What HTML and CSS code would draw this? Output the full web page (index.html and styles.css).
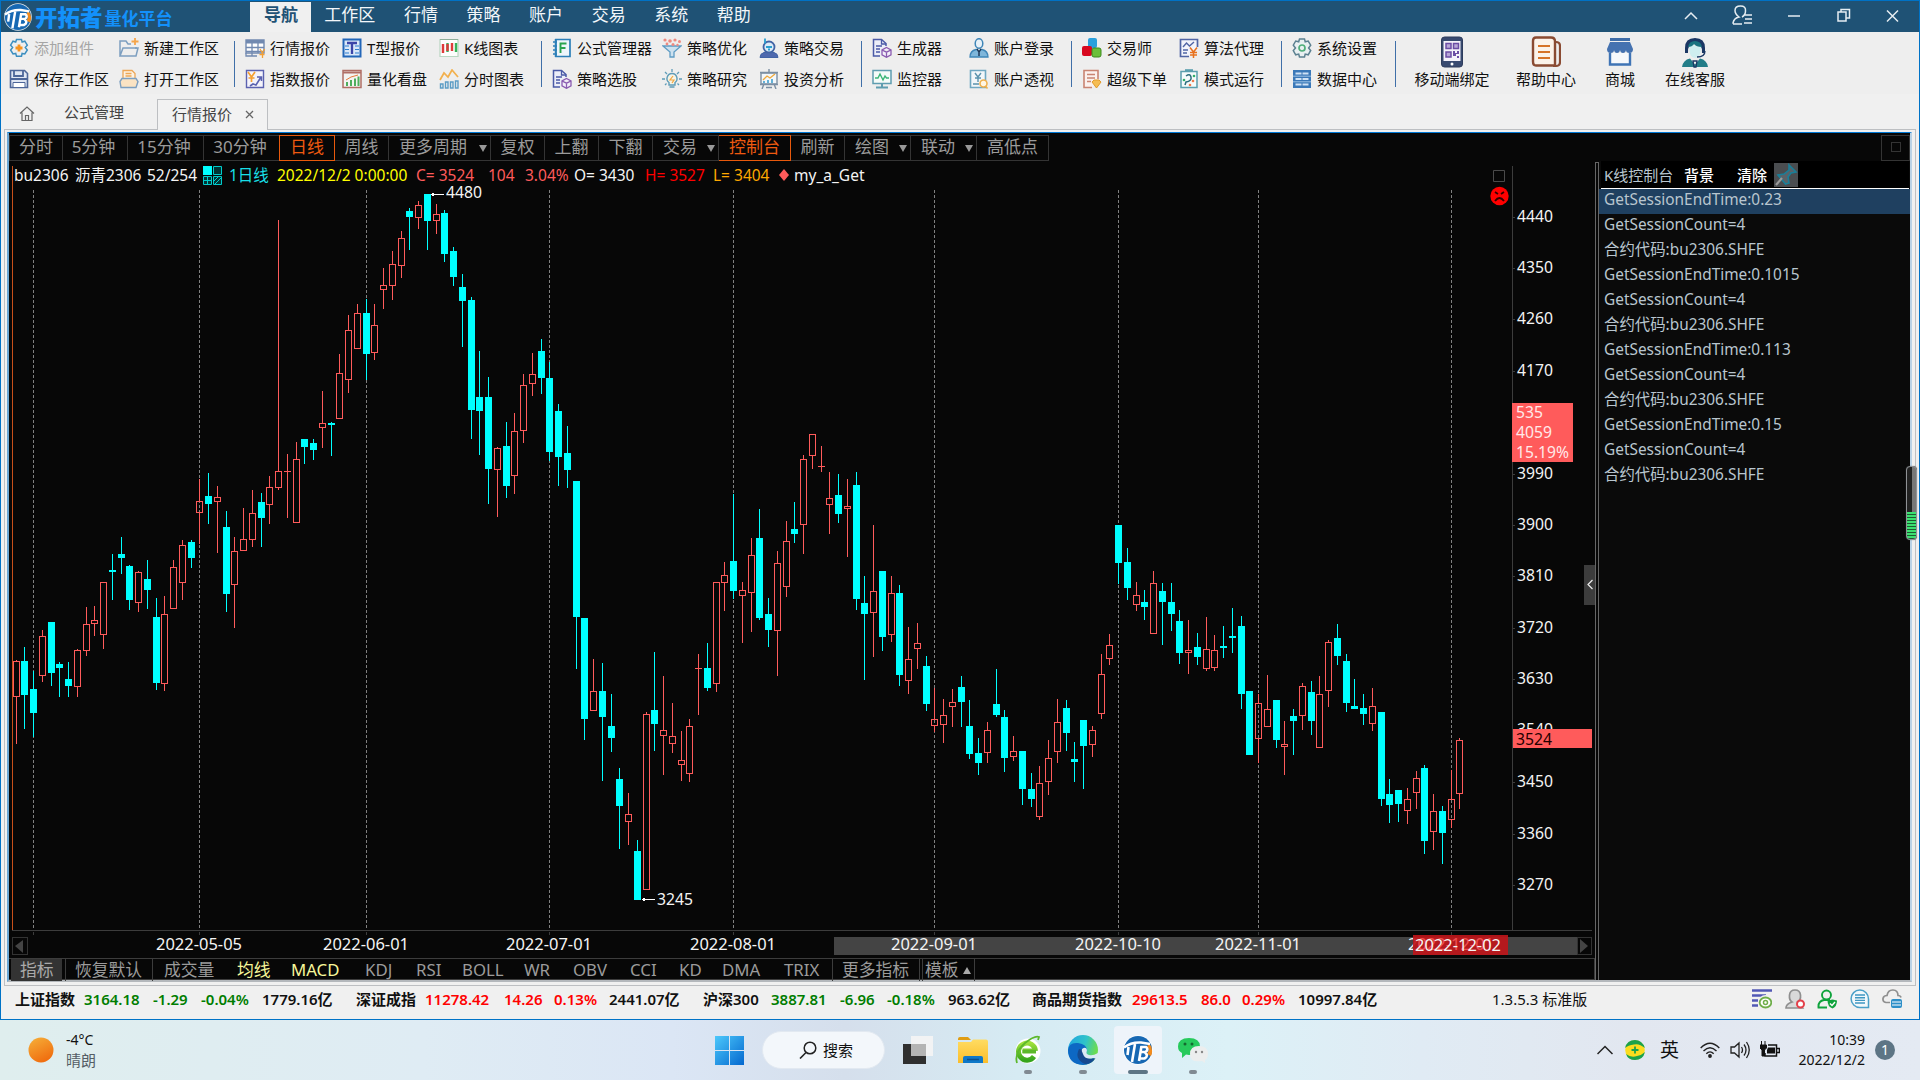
FILE: index.html
```
<!DOCTYPE html>
<html lang="zh-CN">
<head>
<meta charset="utf-8">
<title>开拓者量化平台</title>
<link rel="stylesheet" href="styles.css">
</head>
<body>
<svg class="sprite" width="0" height="0" aria-hidden="true">
  <defs>
    <linearGradient id="g-sun" x1="0" y1="0" x2="0.5" y2="1"><stop offset="0" stop-color="#f6b13a"/><stop offset="1" stop-color="#f06f10"/></linearGradient>
    <linearGradient id="g-win" x1="0" y1="0" x2="1" y2="1"><stop offset="0" stop-color="#4cc8fb"/><stop offset="1" stop-color="#0468cf"/></linearGradient>
    <linearGradient id="g-edge" x1="0" y1="0" x2="1" y2="0.3"><stop offset="0" stop-color="#1fa3e2"/><stop offset="0.6" stop-color="#2fc3c9"/><stop offset="1" stop-color="#6bdc52"/></linearGradient>
    <linearGradient id="g-e" x1="0" y1="0" x2="0" y2="1"><stop offset="0" stop-color="#9fe03c"/><stop offset="1" stop-color="#35a51c"/></linearGradient>
    <linearGradient id="g-fold" x1="0" y1="0" x2="0" y2="1"><stop offset="0" stop-color="#ffdc62"/><stop offset="1" stop-color="#fbbd2a"/></linearGradient>
  </defs>
  <symbol id="logo" viewBox="0 0 30 30">
    <circle cx="15" cy="15" r="14.800" fill="#fff" opacity=".85"/><circle cx="15" cy="15" r="14" fill="#1768b3"/>
    <path d="M26 8q5 6 2 13l-4-2 2-4-2-3z" fill="#f38b1c"/>
    <path d="M1 12.500Q8 7 18 7.500L27 9" stroke="#fff" stroke-width="2.600" fill="none"/>
    <path d="M5.500 12L4.500 20M12 9L9 27M18.500 11l-2.500 15M18 12h5q3 2.500-.5 5H18M22 17.500q4 3.500-.5 6H17" stroke="#fff" stroke-width="2.600" fill="none"/>
  </symbol>
  <symbol id="addc" viewBox="0 0 20 20"><path d="M7.500 1.500h5l.6 2.500 2.700-.8 2.500 4-2 2.300 2 2.500-2.500 4-2.700-.6-.6 2.800h-5l-.8-2.800-2.700.6-2.400-4 2-2.500-2-2.300 2.400-4 2.700.8z" fill="none" stroke="#3c8fc0" stroke-width="1.500"/><path d="M10 6.500v7M6.500 10h7" stroke="#f7931e" stroke-width="2.800"/></symbol>
  <symbol id="newws" viewBox="0 0 20 20"><path d="M1 18V3h6l2 3h3M17 9v2M1 18l3-8h15l-2 8z" fill="none" stroke="#7d9fc0" stroke-width="1.500"/><path d="M16 0v7M12.500 3.500h7" stroke="#f5a54a" stroke-width="1.800"/></symbol>
  <symbol id="save" viewBox="0 0 20 20"><path d="M1.500 1.500h14l3 3v14h-17z" fill="#dfe6f3" stroke="#4d6699" stroke-width="1.600"/><path d="M5 1v6h9V1M1 10h18" stroke="#4d6699" stroke-width="1.800" fill="none"/><path d="M4 13.500h12v5H4z" fill="#fff" stroke="#4d6699"/></symbol>
  <symbol id="openws" viewBox="0 0 20 20"><path d="M4 9V1.500h9l3 3V9" fill="#fdf2e2" stroke="#eda656" stroke-width="1.300"/><path d="M6.500 4.500h6M6.500 7h6" stroke="#eda656" stroke-width="1.300"/><path d="M3 9.500h14l2 3-2 6H2l-1-6z" fill="#fbe3c3" stroke="#7d9fc0" stroke-width="1.400"/></symbol>
  <symbol id="quote" viewBox="0 0 20 20"><path d="M1 2h18v13H1z" fill="#fff" stroke="#7189b0" stroke-width="1.400"/><path d="M1 2h18v3.500H1z" fill="#7189b0"/><path d="M7 5v13M13 5v10M1 9.500h18M1 13.500h18M1 15v3h11" stroke="#7189b0" stroke-width="1.300" fill="none"/><path d="M15 11l2.500 4 2-4M17.500 15v5M14.500 16.500h5" stroke="#f5a033" stroke-width="1.300" fill="none"/></symbol>
  <symbol id="index" viewBox="0 0 20 20"><path d="M1.500 1.500h17v17h-17z" fill="#f4f3fb" stroke="#5b62b0" stroke-width="1.400"/><path d="M3 3l3.500 5L10 3M6.500 8v5M3.500 9h6" stroke="#f5a033" stroke-width="1.700" fill="none"/><path d="M5 17l3-2 3 1 5-8M12 8h4.500v4" stroke="#5b62b0" stroke-width="1.600" fill="none"/></symbol>
  <symbol id="tquote" viewBox="0 0 20 20"><path d="M1.500 1.500h17v17h-17z" fill="#d9e7f8" stroke="#2266b8" stroke-width="2"/><path d="M5 5h10M10 5v11" stroke="#3b45a8" stroke-width="2.300"/><path d="M3 8h4M3 11.500h4M3 15h4M13 8h4M13 11.500h4M13 15h4" stroke="#2f7fd0" stroke-width="1.200"/></symbol>
  <symbol id="board" viewBox="0 0 20 20"><path d="M1 1.500h18v17H1z" fill="#f4f4f2" stroke="#b06f66" stroke-width="1.500"/><path d="M1 3.500h18" stroke="#b06f66" stroke-width="2"/><path d="M5 17v-4M9 17v-6M13 17V9.500M16.500 17V7.500" stroke="#4fae5d" stroke-width="2"/><path d="M4 11l5-3 7-2" stroke="#e57b3b" fill="none"/></symbol>
  <symbol id="kline" viewBox="0 0 20 20"><path d="M1 1.500h18v17H1z" fill="#fdfdfd" stroke="#b9d6c2" stroke-width="1.200"/><path d="M1 1.500h18" stroke="#8eae9a"/><path d="M4 6v9M13 5v8" stroke="#df3a3a" stroke-width="2.400"/><path d="M8.500 5v9M17 5v9" stroke="#38b35b" stroke-width="2.400"/><path d="M8.500 6v7" stroke="#df3a3a" stroke-width="2.400"/></symbol>
  <symbol id="tick" viewBox="0 0 20 20"><path d="M1 11l4-7 4 4 4-7 6 7" stroke="#f2b04d" stroke-width="1.700" fill="none"/><path d="M1.500 19v-4h2.500v4zM6.500 19v-6H9v6zM11.500 19v-6H14v6zM16.500 19v-7H19v7z" fill="none" stroke="#5b9cc5" stroke-width="1.400"/></symbol>
  <symbol id="formula" viewBox="0 0 20 20"><path d="M4 1.500h14v17H4z" fill="#eef6fb" stroke="#2c7fb8" stroke-width="1.700"/><path d="M3.500 1v18M1 4h4M1 8h4M1 12h4M1 16h4" stroke="#2c7fb8" stroke-width="1.500"/><path d="M8.500 15V5.500h6M8.500 10h5" stroke="#2aa34e" stroke-width="1.900" fill="none"/></symbol>
  <symbol id="doccube" viewBox="0 0 20 20"><path d="M8 18H1.500V1.500h8l4.500 4V8" fill="#eceef8" stroke="#4a5aa6" stroke-width="1.500"/><path d="M9.500 1.500V6H14M4 8h6M4 11h4M4 14h4" stroke="#4a5aa6" stroke-width="1.300" fill="none"/><path d="M14.500 9.500l4.500 2.300v5l-4.500 2.500-4.500-2.500v-5zM10 12l4.500 2.200L19 12M14.500 14.200v5" fill="#f3eefa" stroke="#8a5bb0" stroke-width="1.300"/></symbol>
  <symbol id="funnel" viewBox="0 0 20 20"><path d="M1 8h18l-7 6v5H8v-5z" fill="#cde1ef" stroke="#5f9cc4" stroke-width="1.300"/><g fill="#ee8a80"><circle cx="3" cy="2" r="1.600"/><circle cx="8" cy="3" r="1.800"/><circle cx="13" cy="2" r="1.600"/><circle cx="17.500" cy="3.500" r="1.500"/><circle cx="5" cy="6" r="1.400"/><circle cx="11" cy="6.500" r="1.500"/><circle cx="15.500" cy="7" r="1.200"/></g></symbol>
  <symbol id="bulb" viewBox="0 0 20 20"><path d="M10 4.500a5 5 0 0 1 3 9v2.500H7v-2.500a5 5 0 0 1 3-9zM7.500 18h5" fill="#f6f4e6" stroke="#5f9cb8" stroke-width="1.400"/><path d="M10 0v3M3 3l2 2M17 3l-2 2M0 10h3M17 10h3M3 16l1.500-1.500M17 16l-1.500-1.500" stroke="#5f9cb8" stroke-width="1.300"/><path d="M11 7l-3 4h4l-2 3" stroke="#f2a742" stroke-width="1.200" fill="none"/></symbol>
  <symbol id="robot" viewBox="0 0 20 20"><circle cx="10" cy="9" r="5.500" fill="#dcebf7" stroke="#4264a5" stroke-width="1.800"/><path d="M7 9h6M9 11.500h2M6 .5v5" stroke="#2b9fd0" stroke-width="1.800"/><path d="M1 19.500q0-4 4-5h2q3 1.500 6 0h2q4 1 4 5z" fill="#4f69ae" stroke="#4264a5"/></symbol>
  <symbol id="invest" viewBox="0 0 20 20"><path d="M2 4h16v11H2z" fill="#f3f7fa" stroke="#7c8fa3" stroke-width="1.400"/><path d="M1 3.500h18M10 0v3M5 15l-2 5M15 15l2 5M1 15.500h18M7 18.500h6" stroke="#7c8fa3" stroke-width="1.400"/><path d="M4 11l4-4 3 2 5-4" stroke="#f0a93a" stroke-width="1.300" fill="none"/><path d="M5 14v-2M9 14v-3M13 14v-4" stroke="#3f9fd0" stroke-width="1.600"/></symbol>
  <symbol id="monitor" viewBox="0 0 20 20"><path d="M1 1.500h18v13H1z" fill="#f5fbf9" stroke="#5f9db0" stroke-width="1.500"/><path d="M10 15v3M4 18.500h12" stroke="#5f9db0" stroke-width="2"/><path d="M3 9h3l2-4 3 6 2-4 1.500 2H17" stroke="#3cb678" stroke-width="1.400" fill="none"/></symbol>
  <symbol id="login" viewBox="0 0 20 20"><ellipse cx="10" cy="5.500" rx="3.800" ry="4.800" fill="#e7f1f8" stroke="#3f86b8" stroke-width="1.500"/><path d="M1 19q0-6 6-7.500h6q6 1.500 6 7.500z" fill="#7fb6da" stroke="#3f86b8" stroke-width="1.300"/><path d="M8 11l2 3 2-3M10 13v5" stroke="#1f3a5a" stroke-width="1.500" fill="#fff"/></symbol>
  <symbol id="persp" viewBox="0 0 20 20"><path d="M1.500 1.500h15v17h-15z" fill="#f2f7fa" stroke="#6fa8c2" stroke-width="1.600"/><path d="M6 4l3 4 3-4M9 8v5M6 9h6M4 15h6" stroke="#5a93ad" stroke-width="1.400" fill="none"/><circle cx="14.500" cy="14.500" r="3.500" fill="#fff6e4" stroke="#f0b04d" stroke-width="1.600"/><path d="M16.500 17l2 2.500" stroke="#f0b04d" stroke-width="1.600"/></symbol>
  <symbol id="trader" viewBox="0 0 20 20"><rect x="6" y="0" width="9" height="10" rx="2" fill="#2aa0dc"/><rect x="0" y="8" width="10" height="10" rx="2" fill="#d8081f"/><rect x="10" y="10" width="9" height="9" rx="2" fill="#6cbf3a" stroke="#3c8a1f"/></symbol>
  <symbol id="super" viewBox="0 0 20 20"><path d="M10 18.500H2v-17h14V10" fill="#fbf1ee" stroke="#c98472" stroke-width="1.600"/><path d="M5 5.500h8M5 9h8M5 12.500h4" stroke="#c98472" stroke-width="1.400"/><path d="M10 13l2-2h5l2 2-4.500 6z" fill="#f5bd54" stroke="#e39a2a"/></symbol>
  <symbol id="algo" viewBox="0 0 20 20"><path d="M10 18.500H1.500v-17h17V9" fill="#f2f4fb" stroke="#5065a5" stroke-width="1.700"/><path d="M4 9l3.500-4 3 3L15 4M4 12h5M4 15h4" stroke="#5065a5" stroke-width="1.400" fill="none"/><path d="M11 9.500l3.500 4.500 3.500-4.500M14.500 14v6M11 14.500h7M11 17h7" stroke="#e8711d" stroke-width="1.500" fill="none"/></symbol>
  <symbol id="mode" viewBox="0 0 20 20"><path d="M2 2.500h16v16H2z" fill="#f5fbfb" stroke="#5a9fae" stroke-width="1.500"/><path d="M6 1.500h8" stroke="#5a9fae" stroke-width="2.600"/><path d="M7 7q4-3 5 1t-5 5l-1 3" stroke="#2d6e7d" stroke-width="1.500" fill="none"/><g fill="#2fae6a"><circle cx="5" cy="11" r="1.300"/><circle cx="15" cy="7" r="1.300"/></g><g fill="#ee7b4c"><circle cx="14" cy="12" r="1.300"/><circle cx="11" cy="16" r="1.300"/></g></symbol>
  <symbol id="gear" viewBox="0 0 20 20"><path d="M7.500 1h5l.7 2.800 3-.8 2.500 4.200L16.600 10l2.100 2.500-2.500 4.300-3-.7-.7 2.900h-5l-.8-2.900-3 .7-2.400-4.300L3.500 10 1.300 7.200 3.700 3l3 .8z" fill="#e9f0f2" stroke="#5b8090" stroke-width="1.500"/><circle cx="10" cy="10" r="3" fill="none" stroke="#4fae7a" stroke-width="1.700"/></symbol>
  <symbol id="data" viewBox="0 0 20 20"><path d="M1 1h18v18H1z" fill="#3a78b8"/><path d="M3.500 3.500h13v2h-13zM3.500 9h13v2h-13zM3.500 14.500h13v2h-13z" fill="#cfe2f5"/><path d="M1 7.200h18M1 12.800h18" stroke="#9cc1e4"/><path d="M10 3v3M10 8.500v3M10 14v3" stroke="#3a78b8"/></symbol>
  <symbol id="phone" viewBox="0 0 24 32"><rect x="1.500" y="1" width="21" height="30" rx="3" fill="#384a70" stroke="#2e3c5c"/><path d="M3.500 5h17v20h-17z" fill="#f4f2fa"/><path d="M6 7.500h5v5H6zM13.500 7.500h5v5h-5zM6 16h5v5H6z" fill="#b7a6d6" stroke="#6b4da5" stroke-width="1.500"/><path d="M13 15h2v2h2v-2h2v3h-3v2h-3zM17 20h2v2h-2z" fill="#6b4da5"/><circle cx="12" cy="28" r="1.500" fill="#fff"/></symbol>
  <symbol id="help" viewBox="0 0 30 32"><path d="M5 1.500h15q4 0 4 4v24H5q-3 0-3-4V5q0-3.500 3-3.500z" fill="#fbf3ea" stroke="#8a4b32" stroke-width="2.400"/><path d="M24 6h1q4 0 4 4v16q0 4-4 4h-3" fill="none" stroke="#8a4b32" stroke-width="2.200"/><path d="M7 10h12M7 16h12M7 22h12" stroke="#d67428" stroke-width="2.200"/></symbol>
  <symbol id="shop" viewBox="0 0 28 32"><path d="M4 2h20v3H4z" fill="#3f6da8"/><path d="M4 6h20l3 7q0 4-3.500 4T20 14q-.5 3-3 3T14 14q-.5 3-3 3T8 14q0 3-3.500 3T1 13z" fill="#4572b0"/><path d="M4 17v11.500h20V17" fill="#f6f8fb" stroke="#3f74b5" stroke-width="2.400"/></symbol>
  <symbol id="service" viewBox="0 0 28 32"><path d="M4 12q0-10 10-10t10 10v5h-3q1-9-7-9T7 17H4z" fill="#1b3764"/><path d="M8 10q0 12 6 12t6-12q-6 2-8-2-2 2-4 2z" fill="#cfeef0"/><path d="M7 11q1-6 7-6t7 6q-6 0-8-3-2 3-6 3z" fill="#1a7380"/><path d="M1 31q1-7 8-8.500l5 6 5-6q7 1.500 8 8.500z" fill="#237d88"/><path d="M24 15q0 6-8 6M12 25h4l-1 6h-2z" stroke="#1b3764" stroke-width="1.300" fill="none"/></symbol>
</svg>

<div class="window">
  <header class="titlebar">
    <div class="brand">
      <svg class="brand-logo"><use href="#logo"/></svg>
      <span class="brand-name">开拓者</span><span class="brand-sub">量化平台</span>
    </div>
    <nav class="menu">
      <a class="menu-item active">导航</a><a class="menu-item">工作区</a><a class="menu-item">行情</a><a class="menu-item">策略</a><a class="menu-item">账户</a><a class="menu-item">交易</a><a class="menu-item">系统</a><a class="menu-item">帮助</a>
    </nav>
    <svg class="controls" width="230" height="31" viewBox="1690 1 230 31" fill="none" stroke="#e6edf2" stroke-width="1.500">
      <path d="M1685 19l6-6 6 6"/>
      <path d="M1736 24q-3 0-3-1 1-5 6-6-4-3-4-6.500 0-4.500 5.500-4.500t5 5q0 4-3.500 6M1733 24h9M1745 15h7M1745 19h7M1744 23h8"/>
      <path d="M1788 16h12"/>
      <path d="M1838 12h8v9h-8zM1841 12V9.500h8.500V18H1846"/>
      <path d="M1887 10.500l11 11M1898 10.500l-11 11"/>
    </svg>
  </header>

  <section class="ribbon">
    <div class="group g1">
      <button class="cmd disabled"><svg><use href="#addc"/></svg>添加组件</button><button class="cmd"><svg><use href="#newws"/></svg>新建工作区</button>
      <button class="cmd"><svg><use href="#save"/></svg>保存工作区</button><button class="cmd"><svg><use href="#openws"/></svg>打开工作区</button>
    </div>
    <div class="group g2">
      <button class="cmd"><svg><use href="#quote"/></svg>行情报价</button><button class="cmd"><svg><use href="#tquote"/></svg>T型报价</button><button class="cmd"><svg><use href="#kline"/></svg>K线图表</button>
      <button class="cmd"><svg><use href="#index"/></svg>指数报价</button><button class="cmd"><svg><use href="#board"/></svg>量化看盘</button><button class="cmd"><svg><use href="#tick"/></svg>分时图表</button>
    </div>
    <div class="group g3">
      <button class="cmd"><svg><use href="#formula"/></svg>公式管理器</button><button class="cmd"><svg><use href="#funnel"/></svg>策略优化</button><button class="cmd"><svg><use href="#robot"/></svg>策略交易</button>
      <button class="cmd"><svg><use href="#doccube"/></svg>策略选股</button><button class="cmd"><svg><use href="#bulb"/></svg>策略研究</button><button class="cmd"><svg><use href="#invest"/></svg>投资分析</button>
    </div>
    <div class="group g4">
      <button class="cmd"><svg><use href="#doccube"/></svg>生成器</button><button class="cmd"><svg><use href="#login"/></svg>账户登录</button>
      <button class="cmd"><svg><use href="#monitor"/></svg>监控器</button><button class="cmd"><svg><use href="#persp"/></svg>账户透视</button>
    </div>
    <div class="group g5">
      <button class="cmd"><svg><use href="#trader"/></svg>交易师</button><button class="cmd"><svg><use href="#algo"/></svg>算法代理</button>
      <button class="cmd"><svg><use href="#super"/></svg>超级下单</button><button class="cmd"><svg><use href="#mode"/></svg>模式运行</button>
    </div>
    <div class="group g6">
      <button class="cmd"><svg><use href="#gear"/></svg>系统设置</button>
      <button class="cmd"><svg><use href="#data"/></svg>数据中心</button>
    </div>
    <div class="bigs">
      <button class="big"><svg><use href="#phone"/></svg>移动端绑定</button><button class="big"><svg><use href="#help"/></svg>帮助中心</button><button class="big narrow"><svg><use href="#shop"/></svg>商城</button><button class="big"><svg><use href="#service"/></svg>在线客服</button>
    </div>
  </section>

  <div class="tabs">
    <svg class="home" width="16" height="16" viewBox="0 0 16 16" fill="none" stroke="#666" stroke-width="1.200"><path d="M1 7.500L8 1l7 6.500M3 6.500v8h10v-8M6.500 14.500V9.500h3v5"/></svg>
    <span class="tab">公式管理</span>
    <span class="tab current">行情报价<svg class="close" width="9" height="9" viewBox="0 0 9 9"><path d="M1 1l7 7M8 1l-7 7" stroke="#666" stroke-width="1.300"/></svg></span>
  </div>

  <main class="frame">
    <div class="screen">
      <div class="toolbar">
        <span class="tool w54">分时</span><span class="tool w65">5分钟</span><span class="tool w77">15分钟</span><span class="tool w75">30分钟</span><span class="tool w55 on">日线</span><span class="tool w54">周线</span><span class="tool w101 drop">更多周期<i></i></span><span class="tool w54">复权</span><span class="tool w54">上翻</span><span class="tool w54">下翻</span><span class="tool w66 drop">交易<i></i></span><span class="tool w72 on">控制台</span><span class="tool w54">刷新</span><span class="tool w66 drop">绘图<i></i></span><span class="tool w66 drop">联动<i></i></span><span class="tool w72">高低点</span>
        <span class="maxbox"><i></i></span>
      </div>
      <div class="body">
        <div class="chart">
          <div class="plot-area">
            <svg id="plot" width="1586" height="797" viewBox="9 161 1586 797"></svg>
            <div class="info">
              <span>bu2306</span><span>沥青2306</span><span>52/254</span>
              <svg width="19" height="19" viewBox="0 0 19 19"><path d="M0 0h9v9H0z" fill="#0ff"/><path d="M10.500.5h8v8h-8zM.5 10.500h8v8h-8zM10.500 10.500h8v8h-8z" fill="#033" stroke="#0cc"/><path d="M1 14.500h8M4.500 11v8" stroke="#0cc"/><path d="M11 15l4-4M12 18l6-6" stroke="#0cc"/></svg>
              <span class="cyan">1日线</span><span class="yellow">2022/12/2 0:00:00</span><span class="rose">C= 3524</span><span class="rose">104</span><span class="rose">3.04%</span><span>O= 3430</span><span class="red">H= 3527</span><span class="orange">L= 3404</span>
              <svg width="12" height="12" viewBox="0 0 12 12"><path d="M6 0l5 6-5 6-5-6z" fill="#ff5b5b"/></svg>
              <span>my_a_Get</span>
            </div>
          </div>
          <div class="indicators">
            <span class="ind solid">指标</span><span class="ind boxed">恢复默认</span><span class="ind">成交量</span><span class="ind lit">均线</span><span class="ind lit">MACD</span><span class="ind">KDJ</span><span class="ind">RSI</span><span class="ind">BOLL</span><span class="ind">WR</span><span class="ind">OBV</span><span class="ind">CCI</span><span class="ind">KD</span><span class="ind">DMA</span><span class="ind">TRIX</span><span class="ind boxed">更多指标</span><span class="ind boxed menu-up">模板<i></i></span>
          </div>
        </div>
        <div class="splitter"></div>
        <aside class="console">
          <div class="console-head">
            <span>K线控制台</span><b>背景</b><b>清除</b>
            <span class="pin"><svg width="24" height="24" viewBox="0 0 24 24"><path d="M15 2l7 7-5 1-3 4 1 6-3.500 1L4 12l6-1 5-4z" fill="#5a6268" stroke="#187f99" stroke-width="1.600"/><path d="M8 15l-6 7" stroke="#9a9a9a" stroke-width="2.200"/></svg></span>
          </div>
          <ul class="log">
            <li class="sel">GetSessionEndTime:0.23</li><li>GetSessionCount=4</li><li>合约代码:bu2306.SHFE</li>
            <li>GetSessionEndTime:0.1015</li><li>GetSessionCount=4</li><li>合约代码:bu2306.SHFE</li>
            <li>GetSessionEndTime:0.113</li><li>GetSessionCount=4</li><li>合约代码:bu2306.SHFE</li>
            <li>GetSessionEndTime:0.15</li><li>GetSessionCount=4</li><li>合约代码:bu2306.SHFE</li>
          </ul>
        </aside>
      </div>
    </div>
    <div class="meter"></div>
  </main>

  <footer class="status">
    <div class="quotes">
      <b>上证指数</b><b class="dn">3164.18</b><b class="dn">-1.29</b><b class="dn">-0.04%</b><b>1779.16亿</b>
      <b>深证成指</b><b class="up">11278.42</b><b class="up">14.26</b><b class="up">0.13%</b><b>2441.07亿</b>
      <b>沪深300</b><b class="dn">3887.81</b><b class="dn">-6.96</b><b class="dn">-0.18%</b><b>963.62亿</b>
      <b>商品期货指数</b><b class="up">29613.5</b><b class="up">86.0</b><b class="up">0.29%</b><b>10997.84亿</b>
      <span class="version">1.3.5.3 标准版</span>
    </div>
    <div class="status-icons">
      <svg viewBox="0 0 20 20"><path d="M0 1.500h20M0 6.500h14M0 11.500h6M0 16.500h6" stroke="#5158b5" stroke-width="2.600"/><circle cx="13.500" cy="13.500" r="7.500" fill="#efefef"/><ellipse cx="13.500" cy="13.500" rx="5.800" ry="5" fill="#fff" stroke="#6fae4a" stroke-width="1.800"/><circle cx="13.500" cy="13.500" r="2" fill="none" stroke="#6fae4a" stroke-width="1.500"/></svg>
      <svg viewBox="0 0 20 20"><path d="M7 13Q4 11 4.500 6 5 1 10 1t5.500 5q.5 5-3 7l5 6H1q0-4 6-6z" fill="#d9d9d9" stroke="#8f8f8f" stroke-width="1.700"/><circle cx="15.500" cy="15" r="3.500" fill="#fff" stroke="#e4404a" stroke-width="2"/></svg>
      <svg viewBox="0 0 20 20"><circle cx="9.500" cy="6" r="4.500" fill="none" stroke="#0fa33c" stroke-width="1.900"/><path d="M10 18.500H1.500Q1 12 7 11h6" fill="none" stroke="#0fa33c" stroke-width="1.900"/><path d="M10.500 11.500l5-1 4.500 1q0 6-4.500 8-5-2-5-8z" fill="#0fa33c"/><path d="M13 14.500l2 2 3-3.500" stroke="#fff" stroke-width="1.400" fill="none"/></svg>
      <svg viewBox="0 0 20 20"><path d="M18.500 18.500V10A8.700 8.700 0 1 0 10 18.500z" fill="#f2f8fb" stroke="#4aa0c8" stroke-width="1.500"/><path d="M5 6h10M5 8.700h10M5 11.400h10M5 14h10" stroke="#3f97c2" stroke-width="1.400"/></svg>
      <svg viewBox="0 0 20 20"><path d="M8 13.500H4Q.5 13 1 9.500 1.500 6.500 5 6.500 6 .8 11 1t5 5.500q2.500 0 3 2" fill="none" stroke="#8f8f8f" stroke-width="1.700"/><rect x="9" y="10" width="11" height="9" rx="2" fill="#2e8fc8"/><path d="M10 13h9M10 16h9" stroke="#fff" stroke-width="1.200"/></svg>
    </div>
  </footer>
</div>

<div class="taskbar">
  <div class="weather">
    <svg width="26" height="26"><circle cx="13" cy="13" r="12.500" fill="url(#g-sun)"/></svg>
    <div><p>-4°C</p><p class="dim">晴朗</p></div>
  </div>
  <div class="apps">
    <span class="app win"><svg width="30" height="30"><path d="M0 1h14v14H0zM15 1h14v14H15zM0 16h14v14H0zM15 16h14v14H15z" fill="url(#g-win)"/></svg></span>
    <span class="search"><svg width="18" height="18" viewBox="0 0 18 18"><circle cx="11" cy="7" r="5.800" fill="none" stroke="#222" stroke-width="1.500"/><path d="M7 11.500l-6 6" stroke="#222" stroke-width="1.600"/></svg>搜索</span>
    <span class="app"><svg width="30" height="30"><path d="M0 9h23v20H0z" fill="#2f2f2f"/><path d="M8 1h22v20H8z" fill="#f4f4f4" opacity=".93"/><path d="M8 9h15v12H8z" fill="#b4b4b4"/></svg></span>
    <span class="app"><svg width="30" height="30"><path d="M0 4q0-2 2-2h8l3 3H0z" fill="#e09c12"/><path d="M0 7h13l2-2.500h13q2 0 2 2V28H0z" fill="url(#g-fold)"/><path d="M5 28v-5q0-2 2-2h16q2 0 2 2v5z" fill="#0f78c8"/><path d="M9 24.500h12" stroke="#0a4f8c" stroke-width="1.500"/></svg></span>
    <span class="app run"><svg width="30" height="30" viewBox="0 0 30 30"><circle cx="15" cy="16" r="12.500" fill="#fff"/><path d="M23 16H9.500M22.500 16A8.500 8.500 0 1 0 21 21.500" fill="none" stroke="url(#g-e)" stroke-width="5"/><path d="M9.500 16.500H23" stroke="#5cb82b" stroke-width="3"/><path d="M4 28Q1 18 12 8 22 0 26 2l-1 3" fill="none" stroke="#5cb82b" stroke-width="1.800"/></svg></span>
    <span class="app run"><svg width="30" height="30" viewBox="0 0 30 30"><circle cx="15" cy="15" r="15" fill="url(#g-edge)"/><path d="M0 15Q1 7 10 8q9 1 9 8l-5 2q0 5 6 6l7-1q-4 7-12 7Q0 29 0 15z" fill="#0d68c4"/><path d="M11 14q-5 10 6 15 7 0 10.500-6-6 2-10-1-3-3-2-7z" fill="#154a90"/><path d="M14 14q4-3 5 1-1 3 0 4 4 3 11-1v6l-5-1q-8 2-10-4-2-3-1-5z" fill="#dbeaf6"/></svg></span>
    <span class="app focus"><svg width="30" height="30"><use href="#logo"/></svg></span>
    <span class="app run"><svg width="30" height="30" viewBox="0 0 30 30"><path d="M11 3q11 0 11 8.500T11 20l-3-.4L4 23v-5Q0 16 0 11.500 0 3 11 3z" fill="#27ca5c"/><circle cx="7" cy="9" r="1.500" fill="#15692f"/><circle cx="14" cy="9" r="1.500" fill="#15692f"/><path d="M21 11q9 0 9 8 0 4-3 6v3l-3-2q-12 2-12-7 0-8 9-8z" fill="#eceeee"/><circle cx="18" cy="17" r="1.200" fill="#888"/><circle cx="24" cy="17" r="1.200" fill="#888"/></svg></span>
  </div>
  <div class="tray">
    <svg width="16" height="10" viewBox="0 0 16 10"><path d="M.5 9L8 1.500 15.500 9" fill="none" stroke="#222" stroke-width="1.500"/></svg>
    <svg class="t360" width="20" height="20" viewBox="0 0 20 20"><circle cx="10" cy="10" r="9.800" fill="#fcdc1e"/><path d="M0 8Q2 0 10 0q7 0 10 8-6-5-11-3.500Q3 5 0 8zM20 12q-2 8-10 8-7 0-9-6 5 4 11 2 5-1 8-4z" fill="#1ca24a"/><path d="M10 6.500v7M6.500 10h7" stroke="#1ca24a" stroke-width="1.800"/></svg>
    <span class="ime">英</span>
    <svg class="wifi" width="20" height="16" viewBox="0 0 20 16" fill="none" stroke="#222" stroke-width="1.400"><path d="M.7 6Q10-3.500 19.300 6M3.500 9Q10 2.500 16.500 9M6.300 11.800Q10 8 13.700 11.800"/><circle cx="10" cy="14" r="1.200" fill="#222"/></svg>
    <svg class="vol" width="20" height="18" viewBox="0 0 20 18" fill="none" stroke="#222" stroke-width="1.300"><path d="M1 6h3.500L9 2v14l-4.500-4H1zM11.500 6q2 3 0 6M14 3.500q4 5.500 0 11M16.500 1q5.500 8 0 16"/></svg>
    <svg class="bat" width="20" height="18" viewBox="0 0 20 18"><path d="M1.500 0v4M5 0v4M0 4h6.500v3L4.500 9v6H2V9L0 7z" fill="#111" stroke="#111"/><path d="M8 4h8.500v11H5v-3M17 7.500h2.500v4H17" fill="none" stroke="#111" stroke-width="1.500"/><path d="M8 6.500h7v6H7V9z" fill="#111"/></svg>
    <div class="clock"><p>10:39</p><p>2022/12/2</p></div>
    <span class="badge">1</span>
  </div>
</div>
<script src="script.js"></script>
</body>
</html>
```
FILE: styles.css
```
* { box-sizing: border-box; }
body { margin: 0; width: 1920px; height: 1080px; overflow: hidden; background: #e3ecf5; color: #111;
  font: 15px/20px "Noto Sans", "Noto Sans CJK SC", sans-serif; }
p, ul { margin: 0; padding: 0; list-style: none; }
svg { display: block; flex: none; }
.sprite { position: absolute; }
button { border: 0; background: none; padding: 0; font: inherit; color: inherit; text-align: left; }

.window { height: 1020px; border: 1px solid #0072c6; background: #f0f0f0; display: flex; flex-direction: column; }

.titlebar { height: 31px; background: #1f5275; display: flex; flex: none; }
.brand { width: 249px; padding-left: 3px; display: flex; align-items: center; color: #1391fb; white-space: nowrap; }
.brand-logo { width: 28px; height: 28px; margin-right: 3px; }
.brand-name { font: 900 22.500px/28px "Noto Sans CJK SC", sans-serif; margin-top: -2px; }
.brand-sub { font: 700 17px/28px "Noto Sans CJK SC", sans-serif; margin: 3px 0 0 2px; }
.menu { display: flex; padding-top: 1px; flex: 1; }
.menu-item { padding: 0 14.300px; color: #f3f7fa; font-size: 17px; line-height: 26px; white-space: nowrap; }
.menu-item.active { background: #f0f0f0; color: #1f5275; font-weight: 700; width: 61px; margin-right: -1px; padding: 0 14px; }
.controls { overflow: visible; margin-right: -1px; }

.ribbon { height: 62px; background: #eee; display: flex; flex: none; }
.group { display: grid; grid-auto-rows: 31px; height: 62px; position: relative; flex: none; }
.group::after { content: ""; width: 1px; height: 46px; background: #3f6fa8; position: absolute; right: 1px; top: 9px; }
.g1 { grid-template-columns: 110px 117px; margin-left: 8px; }
.g2 { grid-template-columns: 97px 97px 104px; margin-left: 9px; }
.g3 { grid-template-columns: 110px 97px 104px; margin-left: 9px; }
.g4 { grid-template-columns: 97px 104px; margin-left: 9px; }
.g5 { grid-template-columns: 97px 104px; margin-left: 9px; }
.g6 { grid-template-columns: 105px; margin-left: 9px; }
.cmd { display: flex; align-items: center; gap: 5px; white-space: nowrap; line-height: 20px; }
.cmd svg { width: 20px; height: 20px; }
.disabled { color: #a5a5a5; }
.bigs { display: flex; padding-left: 8px; }
.big { width: 94px; display: flex; flex-direction: column; align-items: center; padding-top: 4px; white-space: nowrap; line-height: 20px; }
.big svg { width: 30px; height: 32px; margin-bottom: 1px; }
.big.narrow { width: 54px; }
.big.narrow + .big { width: 96px; }

.tabs { height: 36px; display: flex; align-items: flex-end; flex: none; border-bottom: 1px solid #bdbfc2; margin: 0 3px; }
.home { margin: 0 0 7px 15px; }
.tab { width: 122px; padding-left: 29px; height: 31px; line-height: 29px; color: #444; }
.tab.current { width: 111px; margin: 0 0 -1px 0; padding: 0 0 2px 14px; border: 1px solid #bdbfc2; border-bottom: 0; background: #f2f2f2; display: flex; align-items: center; gap: 13px; }

.frame { flex: 1; border: 1px solid #bdbfc2; border-top: 0; margin: 0 3px; padding: 2px 3px 3px 2px; position: relative; }
.screen { border: 2px solid #b4b8bc; border-top: 1px solid #0078d4; border-left-color: #6aa6d4; border-right-color: #b9d2e6; height: 850px; background: #070707; display: flex; flex-direction: column; padding-top: 1px; }
.toolbar { height: 27px; display: flex; flex: none; align-items: flex-start; padding-top: 1px; }
.tool { height: 26px; border: 1px solid #343434; border-left-width: 0; color: #9b9b9b; font-size: 17px; line-height: 21px; text-align: center; white-space: nowrap; flex: none; }
.tool:first-child { border-left-width: 1px; }
.tool.on { border: 1px solid #e8590c; color: #ee5a10; margin-left: -1px; }
.tool.drop { position: relative; text-align: left; padding-left: 10px; }
.tool.drop i { position: absolute; right: 3px; top: 9px; border: 4px solid transparent; border-top: 7px solid #999; border-bottom: 0; }
.w54 { width: 54px; } .w55 { width: 56px; } .w65 { width: 65px; } .w66 { width: 66px; } .w72 { width: 72px; }
.tool.w65, .tool.w77, .tool.w75 { padding-right: 3px; }
.tool.on.w72 { width: 73px; } .w75 { width: 76px; } .w77 { width: 76px; } .w101 { width: 102px; }
.maxbox { margin-left: auto; width: 29px; height: 26px; border: 1px solid #343434; display: flex; align-items: center; justify-content: center; }
.maxbox i { width: 10px; height: 10px; border: 1px solid #343434; margin-top: -2px; }

.body { display: flex; flex: 1; min-height: 0; }
.chart { width: 1586px; flex: none; display: flex; flex-direction: column; }
.plot-area { height: 797px; position: relative; flex: none; }
#plot text { font: 16px "Noto Sans", sans-serif; fill: #f4f4f4; }
#plot .dark { fill: #240000; }
#plot .pale { fill: #ffe9e9; }
#plot .ghost { fill: #ff5b5b; }
.info { position: absolute; left: 5px; top: 4px; display: grid; align-items: center; color: #f4f4f4; font-size: 15.500px; white-space: nowrap;
  grid-template-columns: 61px 72px 56px 26px 48px 139px 72px 37px 49px 71px 68px 65px 16px 80px; }
.cyan { color: #18dfe6; } .yellow { color: #ff0; } .rose { color: #ff5b5b; } .red { color: #f00; } .orange { color: #ffa800; }
.indicators { height: 22px; border: 1px solid #3c3c3c; border-width: 1px 1px 1px 0; display: grid; padding-left: 2px; color: #9b9b9b; font-size: 16.800px; line-height: 22px;
  grid-template-columns: 54px 99px 73px 54px 74px 51px 46px 62px 49px 57px 49px 43px 62px 48px 90px 53px; white-space: nowrap; }
.ind.solid { background: #333; color: #aaa; width: 51px; padding-left: 9px; }
.ind.boxed { border-left: 1px solid #3c3c3c; border-right: 1px solid #3c3c3c; width: 88px; padding-left: 9px; }
.ind.lit { color: #f7f79a; }
.ind.menu-up { width: 53px; padding-left: 2px; display: flex; align-items: center; gap: 4px; }
.ind.menu-up i { border: 4px solid transparent; border-bottom: 7px solid #aaa; border-top: 0; }

.splitter { width: 4px; margin: 1px 0 0; border: 1px solid #666; border-bottom: 0; flex: none; }
.console { flex: 1; background: #0a0a0a; color: #b9c6cf; min-width: 0; }
.console-head { height: 28px; margin: 0 1px 0 2px; padding: 1px 0 0 3px; border-bottom: 1px solid #fff; background: #000; display: grid; grid-template-columns: 80px 53px 37px 24px; align-items: center; white-space: nowrap; }
.console-head b { font-weight: 500; color: #fff; }
.pin { background: #4a4d50; height: 24px; }
.log li { height: 25px; line-height: 22px; padding-left: 5px; font-size: 15.400px; }
.log .sel { background: #1f4060; }
.meter { position: absolute; left: 1901px; top: 336px; width: 11px; height: 74px; border: 1px solid #8f9296; border-radius: 4px; box-shadow: 0 0 1px #555;
  background: linear-gradient(90deg, #222 0 60%, #777 60%) 0 0 / 100% 45px no-repeat, repeating-linear-gradient(180deg, #3be070 0 2px, #1d5c31 2px 3px) 0 45px no-repeat, #222; }

.status { height: 35px; display: flex; flex: none; justify-content: space-between; align-items: center; padding: 0 17px 10px 14px; }
.quotes { display: grid; white-space: nowrap; font-size: 15px;
  grid-template-columns: 69px 69px 48px 61px 94px 69px 79px 50px 55px 94px 68px 69px 47px 61px 84px 100px 69px 41px 56px 194px 110px; }
.quotes b { font-weight: 600; }
.dn { color: #007d00; } .up { color: #f00; }
.status-icons { display: flex; gap: 12.500px; }
.status-icons svg { width: 20px; height: 20px; }

.taskbar { height: 60px; position: relative; display: grid; grid-template-columns: 715px 1fr 323px;
  background: linear-gradient(90deg, #dfeeee 0, #dfecf4 22%, #dbe6f5 35%, #d5dfec 44%, #d6ebf3 53%, #dcf1f7 64%, #e0ebf4 74%, #e2e7f0 85%, #e4eaf3 100%); }
.weather { display: flex; gap: 12px; padding-left: 28px; align-items: center; }
.weather p { line-height: 20px; font-size: 14px; }
.weather .dim { color: #555e66; font-size: 15px; }
.apps { display: flex; align-items: center; }
.app { width: 30px; height: 48px; margin-right: 25px; display: flex; align-items: center; justify-content: center; position: relative; }
.app.win { margin-right: 17px; }
.search { width: 123px; height: 38px; border-radius: 19px; background: #f3f7fb; margin-right: 18px; display: flex; align-items: center; gap: 6px; padding-left: 36px; border: 1px solid #e2e9f1; }
.app.run::after, .app.focus::after { content: ""; position: absolute; bottom: 0; width: 8px; height: 4px; border-radius: 2px; background: #808a92; }
.app.focus { width: 48px; background: #eef4fa; border-radius: 4px; margin: 0 16px 0 -9px; }
.app.focus::after { width: 20px; background: #5d7585; }
.tray { display: flex; align-items: center; }
.t360 { margin-left: 12px; }
.ime { font-size: 19px; margin-left: 15px; }
.wifi { margin-left: 21px; }
.vol, .bat { margin-left: 10px; }
.clock { width: 85px; text-align: right; font-size: 14px; }
.clock p { line-height: 20px; }
.badge { width: 20px; height: 20px; border-radius: 50%; background: #5d7585; color: #fff; text-align: center; font-size: 14px; line-height: 20px; margin-left: 10px; }
```
FILE: script.js
```
// Daily bars: direction (u = rise, d = fall), body top, body bottom, high, low.
const bars = `u661,697,660,744 d661,695,647,729 d689,713,671,737 u636,676,630,682 d622,673,622,686 d664,668,662,697 d679,686,662,697
u650,687,649,697 u624,651,607,656 u620,624,606,636 u582,635,582,649 d570,572,554,600 d554,558,537,574 d566,600,565,610 u572,603,571,612
d579,590,560,609 d617,683,598,690 u614,684,596,691 u567,609,560,609 u545,583,540,600 d542,558,540,568 u501,513,479,544 d496,504,473,524
u497,502,486,553 d527,594,511,612 u551,585,537,628 u539,551,508,551 u513,540,490,547 d502,518,493,547 u487,505,476,524 u471,488,220,490
u471,472,454,518 u459,523,442,523 d439,447,439,464 d443,450,439,460 u423,428,391,448 d423,425,422,456 u373,419,354,419 u330,380,315,393
u313,349,304,349 d313,354,299,380 u325,353,304,360 u285,290,268,309 u264,286,251,300 u238,266,231,278 d211,217,208,250 u205,218,201,229
d194,221,194,250 u214,221,204,234 d213,254,210,262 d251,277,247,286 d287,301,274,347 d300,410,297,439 d397,411,351,455 d397,469,377,504
u448,470,447,517 d446,486,422,498 u431,476,413,494 u385,431,374,443 u374,384,353,396 d351,378,339,394 d378,452,362,461 d411,457,404,486
d453,470,426,488 d481,617,481,669 d618,719,618,740 u691,711,659,711 d691,717,663,781 d726,738,694,752 d779,806,768,849 u814,822,793,845
d851,900,840,900 u714,890,712,890 d710,724,652,751 u730,736,676,775 u736,744,703,753 u760,765,731,781 u726,774,719,782 u668,669,654,715
d668,688,643,691 u582,684,582,692 u575,583,562,611 d561,591,494,599 u590,596,582,643 u555,593,538,632 d538,618,509,620 d614,630,598,647
u563,631,551,676 u541,587,521,597 d529,534,502,543 u459,525,455,554 u434,456,434,469 u466,467,446,472 u498,505,472,534 d495,514,474,523
u506,509,479,557 d485,599,472,610 d603,614,576,680 u591,613,525,657 d571,637,571,651 u593,635,576,642 d593,675,585,686 u659,681,627,694
u643,649,623,669 d666,704,656,711 u719,726,688,732 u715,725,699,743 u702,707,689,727 d687,702,676,727 d726,754,700,759 d753,763,738,775
u730,753,722,763 d704,715,669,717 d717,758,710,772 u751,757,736,761 d751,789,751,805 d789,799,773,807 u783,817,766,820 u758,782,740,795
u722,752,699,763 d708,733,700,751 d759,762,742,782 d720,746,720,789 u730,745,726,757 u674,714,654,719 u645,659,634,665 d525,563,525,584
d562,588,548,600 u595,605,582,611 d602,607,590,620 u583,634,571,634 d591,602,583,645 d602,614,583,631 d621,653,610,664 u650,653,620,674
d647,657,633,665 u649,669,617,671 u650,668,635,671 d646,648,626,658 d636,638,608,653 d626,694,616,709 d691,755,691,755 u703,739,694,763
u709,727,675,727 d700,740,700,748 u744,747,721,775 d716,721,709,755 u686,716,683,730 d692,721,681,735 u694,748,676,748 u642,691,640,707
d638,656,624,665 d661,703,654,712 d706,709,679,709 d708,714,694,725 u706,724,688,731 d712,799,712,806 d794,805,779,823 d790,804,790,822
u799,811,788,824 u778,793,771,809 d768,841,765,854 u811,832,794,850 d811,833,806,864 u799,820,770,828 u740,794,738,809`.split(/\s+/);

const UP = '#ff5b5b', DOWN = '#00ffff', GRID = '#3c3c3c';
const rect = (x, y, w, h, fill) => `<rect x="${x}" y="${y}" width="${w}" height="${h}" fill="${fill}"/>`;
const text = (x, y, s, w, cls = '') => `<text x="${x}" y="${y}" textLength="${w}" lengthAdjust="spacingAndGlyphs" class="${cls}">${s}</text>`;
let out = '';

// time axis
out += rect(12, 166, 1, 764, '#c8501a') + rect(12, 930, 1580, 1, GRID) + rect(1512, 166, 1, 764, GRID);
out += rect(834, 937, 743, 18, '#444') + `<rect x="1577.500" y="937.500" width="14" height="17" fill="#070707" stroke="#333"/><path d="M1580 939l8 7-8 7z" fill="#444"/>`;
out += `<rect x="12.500" y="937.500" width="15" height="17" fill="none" stroke="#333"/><path d="M23 940l-8 6 8 7z" fill="#444"/>`;
const dates = [[33, ''], [199, '2022-05-05'], [366, '2022-06-01'], [549, '2022-07-01'], [733, '2022-08-01'],
  [934, '2022-09-01'], [1118, '2022-10-10'], [1258, '2022-11-01'], [1451, '2022-12-01']];
for (const [x, s] of dates) {
  out += `<path d="M${x + .5} 190V929" stroke="#808080" stroke-dasharray="3 2"/>` + rect(x, 932, 1, 3, GRID);
  if (s) out += text(x - 43, 950, s, 86);
}

// candles
bars.forEach((bar, i) => {
  const x = Math.floor(16 + 8.75 * i);
  const [top, bottom, high, low] = bar.slice(1).split(',').map(Number);
  if (bar[0] === 'd') {
    out += rect(x, high, 1, low - high, DOWN) + rect(x - 3, top, 7, bottom - top, DOWN);
  } else {
    out += rect(x, high, 1, top - high, UP) + rect(x, bottom, 1, low - bottom, UP);
    out += bottom - top < 2 ? rect(x - 3, top, 7, 1, UP)
      : `<rect x="${x - 2.5}" y="${top + .5}" width="6" height="${bottom - top - 1}" fill="none" stroke="${UP}"/>`;
  }
});
out += rect(431, 194, 13, 1, '#fff') + rect(432, 193, 2, 3, '#fff') + text(446, 197.5, '4480', 36);
out += rect(642, 899, 13, 1, '#fff') + rect(643, 898, 2, 3, '#fff') + text(657, 904.5, '3245', 36);

// price axis
const prices = [[4440, 217], [4350, 268], [4260, 319], [4170, 371], [3990, 474], [3900, 525], [3810, 576],
  [3720, 628], [3630, 679], [3540, 730], [3450, 782], [3360, 834], [3270, 885]];
for (const [p, y] of prices) out += rect(1513, y, 2, 1, GRID) + text(1517, y + 5, p, 36);
out += rect(1512, 403, 61, 59, UP) + text(1516, 418, '535', 27, 'pale') + text(1516, 438, '4059', 36, 'pale') + text(1516, 458, '15.19%', 53, 'pale');
out += rect(1513, 729, 79, 19, UP) + text(1516, 745, '3524', 36, 'dark');

// last-bar date marker; the month label stays faintly visible below it
out += `<rect x="1413" y="935" width="95" height="20" fill="#be161a" fill-opacity=".92"/><g opacity=".75"><text x="1408" y="950" textLength="86" lengthAdjust="spacingAndGlyphs" class="ghost"><tspan fill-opacity="0">2</tspan>022-12-01</text></g>` + text(1415, 951, '2022-12-02', 86);

// corner box, warning face and panel handle
out += `<path d="M1493.500 170.500h11v11h-11z" fill="none" stroke="#4a4a4a"/><circle cx="1499.500" cy="196" r="9.200" fill="red"/>
<path d="M1495 192l3 2M1504 192l-3 2M1495 201q4.500-6 9 0" stroke="#300" stroke-width="1.800" fill="none"/>`;
out += rect(1584, 565, 11, 40, '#3c3c3c') + '<path d="M1592.500 580l-4.500 4.500 4.500 4.500" fill="none" stroke="#eee" stroke-width="1.200"/>';

document.getElementById('plot').innerHTML = out;
```
